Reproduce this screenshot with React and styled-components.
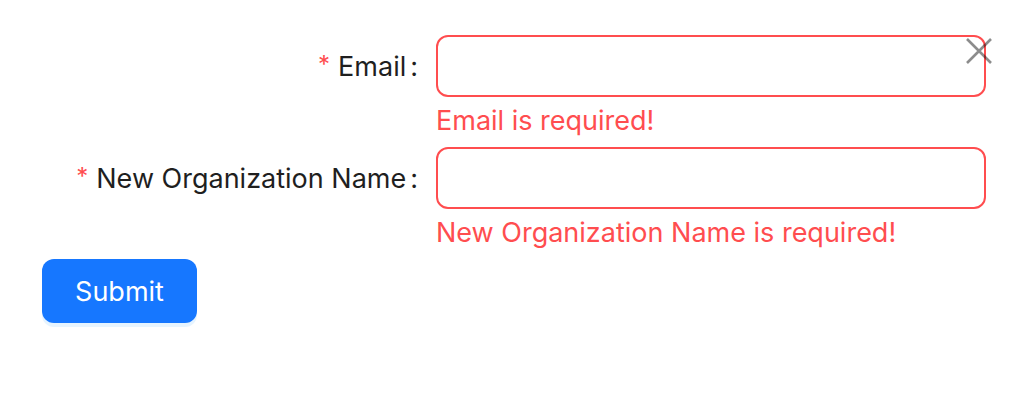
import React from 'react'
import styled, {createGlobalStyle} from "styled-components";

const GlobalStyle = createGlobalStyle`
  html, body {
    margin: 0;
    padding: 0;
    background: #fff;
  }
  body {
    font-family: Inter, "Noto Sans", "Liberation Sans", sans-serif;
    -webkit-font-smoothing: antialiased;
  }
`;

const Modal = styled.div`
  position: relative;
  width: 1032px;
  height: 406px;
  box-sizing: border-box;
  padding: 35px 46px 0 42px;
  background: #fff;
`;

const CloseButton = styled.button`
  position: absolute;
  top: 36px;
  right: 38px;
  width: 30px;
  height: 30px;
  padding: 0;
  border: none;
  background: transparent;
  display: flex;
  align-items: center;
  justify-content: center;
  cursor: pointer;
`;

const Form = styled.form`
  display: flex;
  flex-direction: column;
`;

const FormItem = styled.div`
  display: grid;
  grid-template-columns: 394px 1fr;
  margin-bottom: 2px;
`;

const Label = styled.label`
  display: flex;
  align-items: center;
  justify-content: flex-end;
  height: 62px;
  padding-right: 18px;
  font-size: 27px;
  color: #1f1f1f;
  white-space: nowrap;

  .required {
    color: #ff4d4f;
    font-size: 24px;
    margin-right: 8px;
    position: relative;
    top: -2px;
  }

  .colon {
    margin-left: 4px;
  }
`;

const Control = styled.div`
  display: flex;
  flex-direction: column;
`;

const Input = styled.input`
  box-sizing: border-box;
  width: 100%;
  height: 62px;
  border: 2px solid ${props => props.error ? '#ff4d4f' : '#d9d9d9'};
  border-radius: 12px;
  padding: 0 22px;
  font-size: 28px;
  font-family: inherit;
  outline: none;
`;

const Explain = styled.div`
  height: 48px;
  padding-top: 6px;
  box-sizing: border-box;
  font-size: 27px;
  line-height: 36px;
  color: #ff4d4f;
`;

const SubmitButton = styled.button`
  align-self: flex-start;
  width: 155px;
  height: 64px;
  border: none;
  border-radius: 12px;
  background: #1677ff;
  color: #fff;
  font-family: inherit;
  font-size: 27px;
  box-shadow: 0 4px 0 rgba(5, 145, 255, 0.1);
  cursor: pointer;
`;

const fields = [
    {name: 'email', label: 'Email'},
    {name: 'orgName', label: 'New Organization Name'},
]

export default function App() {
    return (
        <>
            <GlobalStyle/>
            <Modal>
                <CloseButton aria-label="Close">
                    <svg width="26" height="26" viewBox="0 0 26 26">
                        <path d="M1 1 L25 25 M25 1 L1 25" stroke="rgba(0,0,0,0.45)" strokeWidth="2.6"/>
                    </svg>
                </CloseButton>
                <Form onSubmit={e => e.preventDefault()}>
                    {fields.map(field => (
                        <FormItem key={field.name}>
                            <Label htmlFor={field.name}>
                                <span className="required">*</span>
                                {field.label}
                                <span className="colon">:</span>
                            </Label>
                            <Control>
                                <Input id={field.name} error/>
                                <Explain>{field.label} is required!</Explain>
                            </Control>
                        </FormItem>
                    ))}
                    <SubmitButton type="submit">Submit</SubmitButton>
                </Form>
            </Modal>
        </>
    )
}
